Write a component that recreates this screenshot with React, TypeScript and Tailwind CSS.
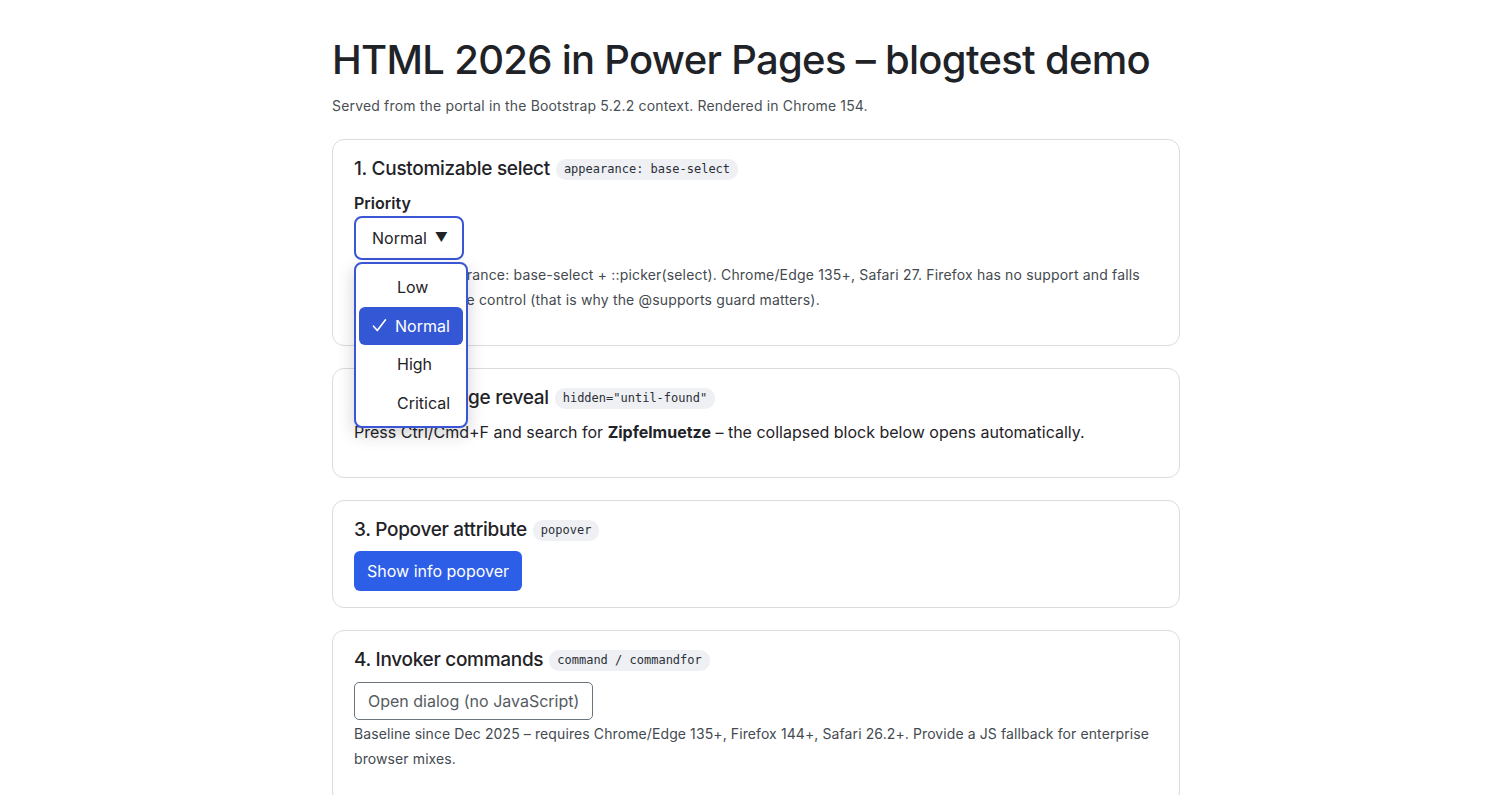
import React from "react";

const sans = { fontFamily: "Inter, 'Noto Sans', 'Liberation Sans', sans-serif" };

function Code({ children }: { children: React.ReactNode }) {
  return (
    <code className="ml-1.5 inline-block rounded-[10px] bg-[#eef0f4] px-2 py-[2px] align-[2px] font-['DejaVu_Sans_Mono',monospace] text-[12px] leading-[17px] tracking-normal text-[#2b2f36]">
      {children}
    </code>
  );
}

function Card({ children }: { children: React.ReactNode }) {
  return (
    <section className="rounded-[12px] border border-[#dcdcdc] bg-white px-[21px] pt-[15px] pb-4">
      {children}
    </section>
  );
}

function Heading({ children }: { children: React.ReactNode }) {
  return (
    <h2 className="mb-[8px] text-[19px] font-medium leading-[28px] tracking-[-0.3px] text-[#1f2328]">
      {children}
    </h2>
  );
}

function Check() {
  return (
    <svg width="15" height="15" viewBox="0 0 15 15" className="mr-[8px] shrink-0" aria-hidden>
      <path d="M1.5 8.2 L5.3 12.6 L13.5 1.8" fill="none" stroke="currentColor" strokeWidth="1.6" strokeLinecap="round" strokeLinejoin="round" />
    </svg>
  );
}

const options = ["Low", "Normal", "High", "Critical"];

export default function App() {
  return (
    <div className="min-h-[795px] bg-white text-[#212529]" style={sans}>
      <main className="mx-auto w-[848px] pt-[36px]">
        <h1 className="mb-[11px] text-[40px] font-medium leading-[48px] tracking-[-0.7px] text-[#1f2328]">
          HTML 2026 in Power Pages – blogtest demo
        </h1>
        <p className="mb-[23px] text-[14px] leading-[21px] tracking-[0.17px] text-[#4a4f55]">
          Served from the portal in the Bootstrap 5.2.2 context. Rendered in Chrome 154.
        </p>

        <div className="flex flex-col gap-[22px]">
          <Card>
            <Heading>
              1. Customizable select<Code>appearance: base-select</Code>
            </Heading>
            <label className="block text-[16px] font-semibold leading-[24px] text-[#1f2328]">Priority</label>
            <div className="relative mt-[1px]">
              <button className="flex h-[44px] w-[110px] items-center rounded-[8px] border-2 border-[#3a56d4] bg-white pl-[16px] text-[16px] text-[#1f2328]">
                Normal <span className="ml-[8px] text-[13px]">▼</span>
              </button>
              <div className="absolute left-0 top-[46px] z-10 w-[114px] rounded-[8px] border-2 border-[#3a56d4] bg-white px-[3px] py-[4px] shadow-[0_6px_18px_rgba(0,0,0,0.18)]">
                {options.map((o) => (
                  <div
                    key={o}
                    className={
                      o === "Normal"
                        ? "flex h-[38.5px] items-center rounded-[6px] bg-[#3457d5] pl-[13px] text-[16px] text-white"
                        : "flex h-[38.5px] items-center pl-[38px] text-[16px] text-[#1f2328]"
                    }
                  >
                    {o === "Normal" && <Check />}
                    {o}
                  </div>
                ))}
              </div>
            </div>
            <p className="mt-[2px] mb-[17px] text-[14px] leading-[25px] tracking-[0.17px] text-[#444a50]">
              Styled via appearance: base-select + ::picker(select). Chrome/Edge 135+, Safari 27. Firefox has no support and falls back to the native control (that is why the @supports guard matters).
            </p>
          </Card>

          <Card>
            <Heading>
              2. Find-in-page reveal<Code>hidden="until-found"</Code>
            </Heading>
            <p className="mb-[17px] text-[16px] leading-[24px] text-[#1f2328]">
              Press Ctrl/Cmd+F and search for <strong className="font-bold">Zipfelmuetze</strong> – the collapsed block below opens automatically.
            </p>
          </Card>

          <Card>
            <Heading>
              3. Popover attribute<Code>popover</Code>
            </Heading>
            <button className="-mt-[1px] h-[40px] rounded-[6px] bg-[#2d5ee8] px-[13px] text-[16px] text-white">
              Show info popover
            </button>
          </Card>

          <Card>
            <Heading>
              4. Invoker commands<Code>command / commandfor</Code>
            </Heading>
            <button className="h-[38px] rounded-[5px] border border-[#6c757d] bg-white px-[13px] text-[16px] text-[#555b61]">
              Open dialog (no JavaScript)
            </button>
            <p className="mt-[1px] mb-4 text-[14px] leading-[25px] tracking-[0.1px] text-[#444a50]">
              Baseline since Dec 2025 – requires Chrome/Edge 135+, Firefox 144+, Safari 26.2+. Provide a JS fallback for enterprise browser mixes.
            </p>
          </Card>
        </div>
      </main>
    </div>
  );
}
